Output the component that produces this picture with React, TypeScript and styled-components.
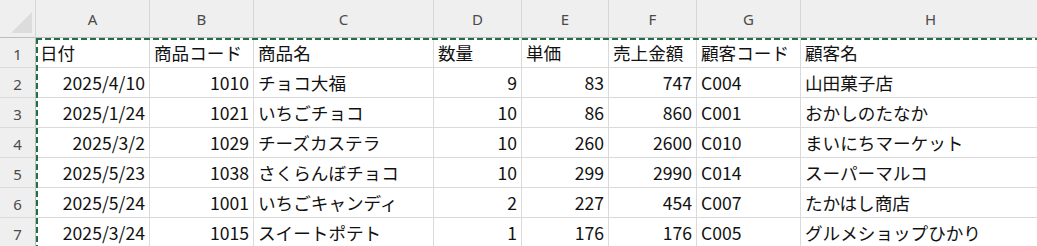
import React from "react";
import styled, { createGlobalStyle } from "styled-components";

const columns = ["A", "B", "C", "D", "E", "F", "G", "H"];

const rows: string[][] = [
  ["日付", "商品コード", "商品名", "数量", "単価", "売上金額", "顧客コード", "顧客名"],
  ["2025/4/10", "1010", "チョコ大福", "9", "83", "747", "C004", "山田菓子店"],
  ["2025/1/24", "1021", "いちごチョコ", "10", "86", "860", "C001", "おかしのたなか"],
  ["2025/3/2", "1029", "チーズカステラ", "10", "260", "2600", "C010", "まいにちマーケット"],
  ["2025/5/23", "1038", "さくらんぼチョコ", "10", "299", "2990", "C014", "スーパーマルコ"],
  ["2025/5/24", "1001", "いちごキャンディ", "2", "227", "454", "C007", "たかはし商店"],
  ["2025/3/24", "1015", "スイートポテト", "1", "176", "176", "C005", "グルメショップひかり"],
];

const isNumeric = (v: string) => /^[\d/]+$/.test(v);

const App = () => {
  return (
    <>
      <GlobalStyle />
      <Sheet>
        <Grid>
          <Corner>
            <svg width="21" height="21" viewBox="0 0 21 21">
              <polygon points="0,21 21,0 21,21" fill="#dcdcdc" />
            </svg>
          </Corner>
          {columns.map((c) => (
            <ColHeader key={c}>{c}</ColHeader>
          ))}
          {rows.map((row, r) => (
            <React.Fragment key={r}>
              <RowHeader>{r + 1}</RowHeader>
              {row.map((value, idx) => (
                <Cell key={idx} $align={isNumeric(value) ? "right" : "left"}>
                  {value}
                </Cell>
              ))}
            </React.Fragment>
          ))}
        </Grid>
        <CopyMarquee />
      </Sheet>
    </>
  );
};

export default App;

const GlobalStyle = createGlobalStyle`
  html, body {
    margin: 0;
    padding: 0;
    background: #fff;
    overflow: hidden;
  }
`;

const Sheet = styled.div`
  position: relative;
  width: 1037px;
  height: 246px;
  overflow: hidden;
  background: #fff;
`;

const Grid = styled.div`
  display: grid;
  grid-template-columns: 36px 114px 104px 180px 88px 87px 88px 104px 260px;
  grid-template-rows: 38px repeat(7, 30px);
`;

const HeaderBase = styled.div`
  box-sizing: border-box;
  display: flex;
  align-items: center;
  justify-content: center;
  background: #efefef;
  color: #4a4a4a;
  font-family: "Noto Sans", "Liberation Sans", sans-serif;
  font-size: 15px;
`;

const Corner = styled(HeaderBase)`
  align-items: flex-end;
  justify-content: flex-end;
  padding: 0 3px 4px 0;
  border-right: 1px solid #d6d6d6;
  border-bottom: 1px solid #bdbdbd;
  svg {
    display: block;
  }
`;

const ColHeader = styled(HeaderBase)`
  padding-top: 1px;
  border-right: 1px solid #d6d6d6;
  border-bottom: 1px solid #bdbdbd;
`;

const RowHeader = styled(HeaderBase)`
  padding-top: 2px;
  border-right: 1px solid #bdbdbd;
  border-bottom: 1px solid #dadada;
`;

const Cell = styled.div<{ $align: "left" | "right" }>`
  box-sizing: border-box;
  display: flex;
  align-items: center;
  justify-content: ${({ $align }) => ($align === "right" ? "flex-end" : "flex-start")};
  padding: 1px 4px 0;
  border-right: 1px solid #dadada;
  border-bottom: 1px solid #dadada;
  font-family: "Noto Sans CJK JP", "Noto Sans", sans-serif;
  font-size: 17.6px;
  line-height: 20px;
  color: #111;
  white-space: nowrap;
  overflow: hidden;
`;

// copy selection "marching ants" around the whole table
const CopyMarquee = styled.div`
  position: absolute;
  left: 36px;
  top: 38px;
  right: -20px;
  bottom: -20px;
  pointer-events: none;
  background:
    linear-gradient(to right, #1f7145 6px, transparent 6px) top left / 9px 2px repeat-x,
    linear-gradient(to bottom, #1f7145 6px, transparent 6px) top left / 2px 9px repeat-y;
`;
